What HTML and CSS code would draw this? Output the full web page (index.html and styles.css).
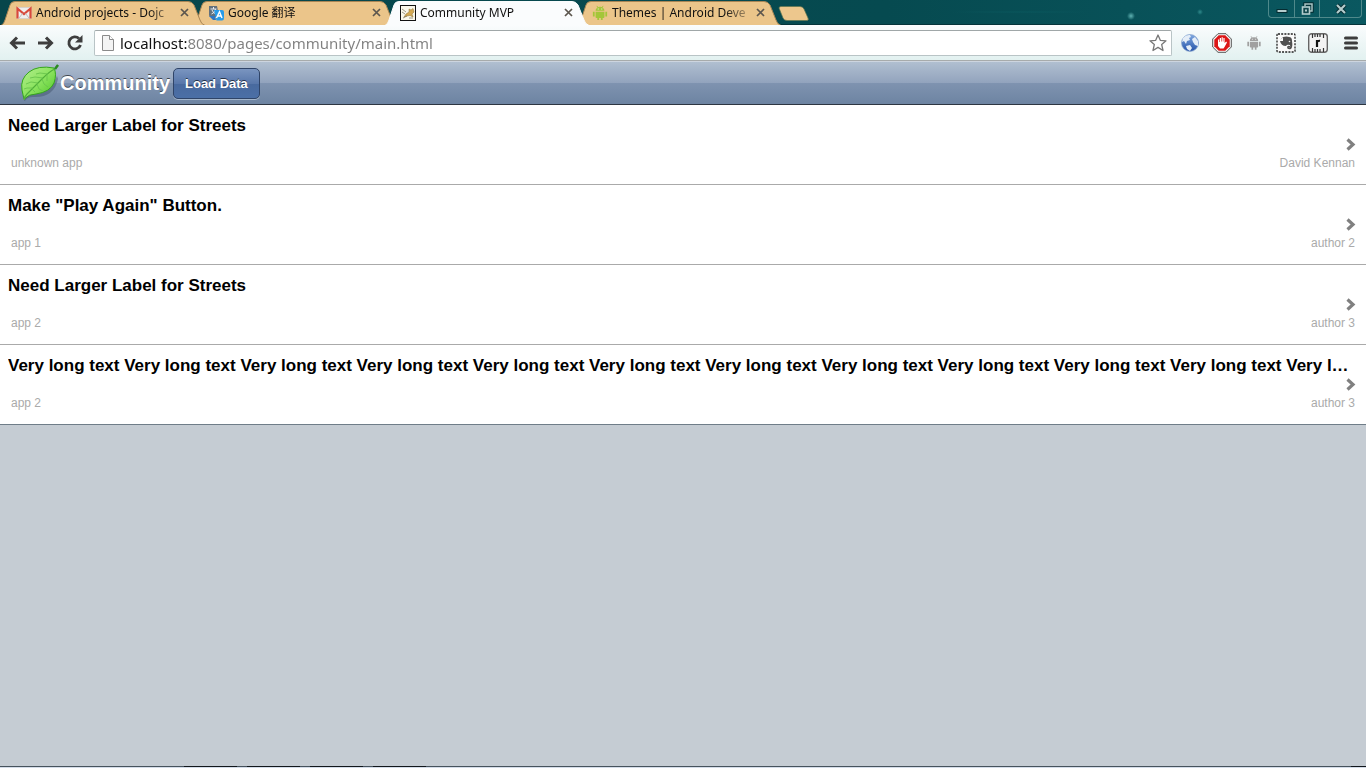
FILE: index.html
```html
<!DOCTYPE html>
<html lang="en">
<head>
<meta charset="utf-8">
<title>Community MVP</title>
<link rel="stylesheet" href="styles.css">
</head>
<body>
<svg width="0" height="0" class="defs" aria-hidden="true">
  <defs>
    <linearGradient id="leafFill" x1="0" y1="0" x2="1" y2="1"><stop offset="0" stop-color="#b5ee8e"/><stop offset=".5" stop-color="#8be35f"/><stop offset="1" stop-color="#4cc424"/></linearGradient>
    <linearGradient id="globeFill" x1="0" y1="0" x2="0" y2="1"><stop offset="0" stop-color="#7fa8e0"/><stop offset="1" stop-color="#2452a8"/></linearGradient>
    <symbol id="tab" viewBox="0 0 206 25"><path d="M1 25.500Q4 24 5 20L10 5Q11 1.500 15 1.500H188Q192 1.500 194 5L200 20Q201 24 205 25.500"/></symbol>
    <symbol id="close" viewBox="0 0 9 9"><path d="M1 1L8 8M8 1L1 8" fill="none" stroke="#5c564e" stroke-width="1.700"/></symbol>
    <symbol id="robot" viewBox="0 0 18 18"><path d="M4 6.500A5 4.500 0 0 1 14 6.500ZM4 7.500H14V13.500Q14 14.500 13 14.500H12V17H10V14.500H8V17H6V14.500H5Q4 14.500 4 13.500ZM1 7.500H3V13H1ZM15 7.500H17V13H15Z"/><path d="M5.500 1L7 3.500M12.500 1L11 3.500" stroke="currentColor"/><path d="M6.500 4.500h1M10.500 4.500h1" stroke="#fff"/></symbol>
    <symbol id="chevron" viewBox="0 0 10 13"><path d="M1.500 1.500L7 6.500L1.500 11.500" fill="none" stroke="#808080" stroke-width="3.200"/></symbol>
  </defs>
</svg>
<header class="browser">
  <div class="strip">
    <nav class="tabs" aria-label="Tabs">
      <div class="tab tab-first">
        <svg class="shape" width="206" height="25"><use href="#tab"/></svg>
        <svg class="fav" viewBox="0 0 16 16"><path d="M1 2.500H15V13.500H1Z" fill="#eee" stroke="#d8cfc8"/><path d="M1.500 13.500V3.500L8 9L14.500 3.500V13.500" fill="none" stroke="#d9483b" stroke-width="2.200"/><path d="M3 13L6.500 8.500M13 13L9.500 8.500" stroke="#bbb" fill="none"/></svg>
        <a class="name" href="#mail">Android projects - Dojc</a>
        <button class="x" aria-label="Close tab"><svg width="9" height="9"><use href="#close"/></svg></button>
      </div>
      <div class="tab">
        <svg class="shape" width="206" height="25"><use href="#tab"/></svg>
        <svg class="fav" viewBox="0 0 16 16"><path d="M1 1H9L11 12H3Q1 12 1 10Z" fill="#62707c"/><path d="M2.500 4H8.500M5.500 2V4M3.500 9Q7 8 7.500 4M4 5Q5 8 8 9" stroke="#e8edf2" fill="none"/><path d="M6 5H14Q16 5 16 7V13Q16 15.500 14 15.500H8.500Z" fill="#279be8"/><path d="M8.500 13L11.500 6.800L14 13M9.500 11H13" stroke="#fff" stroke-width="1.400" fill="none"/><path d="M1 11L5 15H8L7 11Z" fill="#2e75c2"/></svg>
        <a class="name" href="#translate">Google 翻译</a>
        <button class="x" aria-label="Close tab"><svg width="9" height="9"><use href="#close"/></svg></button>
      </div>
      <div class="tab tab-active">
        <svg class="shape" width="206" height="25"><use href="#tab"/></svg>
        <svg class="fav" viewBox="0 0 16 16"><rect x=".5" y=".5" width="15" height="15" fill="#f9f7ea" stroke="#111"/><path d="M4 12L6 9L9 7L9 4L11 5L13 3.500L14 7L12 9L13 12L10 10.500L7 11Z" fill="#d3a954" stroke="#8a7038" stroke-width=".5"/><path d="M2 4L6 7M2 7L5 9M3 13L7 11M9 13H13" stroke="#77705c" stroke-width=".7"/></svg>
        <a class="name" href="#community" aria-current="page">Community MVP</a>
        <button class="x" aria-label="Close tab"><svg width="9" height="9"><use href="#close"/></svg></button>
      </div>
      <div class="tab">
        <svg class="shape" width="206" height="25"><use href="#tab"/></svg>
        <svg class="fav green" viewBox="0 0 18 18"><use href="#robot"/></svg>
        <a class="name" href="#themes">Themes | Android Deve</a>
        <button class="x" aria-label="Close tab"><svg width="9" height="9"><use href="#close"/></svg></button>
      </div>
    </nav>
    <button class="newtab" aria-label="New tab"><svg width="32" height="15" viewBox="0 0 32 15"><path d="M3 .5H22Q25 .5 26 3L30 12Q31 14.500 29 14.500H9Q6 14.500 5 12L1 2Q1 .5 3 .5Z" fill="#edc78d" stroke="#5e744f" stroke-width=".7"/></svg></button>
    <div class="window">
      <button aria-label="Minimize"><svg width="12" height="12"><rect x="1" y="6.500" width="10" height="3" fill="#b4cdcd" stroke="#052c31"/></svg></button>
      <button aria-label="Restore"><svg width="14" height="14" viewBox="0 0 14 14"><path d="M5 4V2H12V9H10" fill="none" stroke="#052c31" stroke-width="3.400"/><path d="M5 4V2H12V9H10" fill="none" stroke="#a7c4c4" stroke-width="1.500"/><rect x="2.500" y="5" width="7" height="7" fill="#12484d" stroke="#b4cdcd" stroke-width="1.600"/><rect x="5" y="7.500" width="2" height="2" fill="#b4cdcd"/></svg></button>
      <button class="wide" aria-label="Close"><svg width="12" height="12" viewBox="0 0 12 12"><path d="M2 2L10 10M10 2L2 10" stroke="#052c31" stroke-width="4"/><path d="M2 2L10 10M10 2L2 10" stroke="#b4cdcd" stroke-width="2.200"/></svg></button>
    </div>
  </div>
  <div class="toolbar">
    <button class="tool" aria-label="Back"><svg viewBox="0 0 18 18"><path d="M17 9H4M9 3.500L3.500 9L9 14.500" fill="none" stroke="#3e3e3e" stroke-width="3"/></svg></button>
    <button class="tool" aria-label="Forward"><svg viewBox="0 0 18 18"><path d="M1 9H14M9 3.500L14.500 9L9 14.500" fill="none" stroke="#3e3e3e" stroke-width="3"/></svg></button>
    <button class="tool" aria-label="Reload"><svg viewBox="0 0 18 18"><path d="M13 4.500A6 6 0 1 0 14.500 11" fill="none" stroke="#3e3e3e" stroke-width="2.900"/><path d="M16.500 1V8.500H9Z" fill="#3e3e3e"/></svg></button>
    <form class="address">
      <svg width="12" height="16" viewBox="0 0 12 16"><path d="M.5 .5H7.500L11.500 4.500V15.500H.5Z" fill="#f4f4f4" stroke="#8a8a8a"/><path d="M7.500 .5V4.500H11.500" fill="#fff" stroke="#8a8a8a"/></svg>
      <input type="text" aria-label="Address" value="localhost:8080/pages/community/main.html">
      <button type="button" aria-label="Bookmark"><svg width="20" height="20" viewBox="0 0 20 20"><path d="M10 2L12.300 7.300L18 7.800L13.700 11.600L15 17.500L10 14.400L5 17.500L6.300 11.600L2 7.800L7.700 7.300Z" fill="#fff" stroke="#777" stroke-width="1.300" stroke-linejoin="round"/></svg></button>
    </form>
    <div class="extensions">
      <button class="ext" aria-label="Globe"><svg viewBox="0 0 20 20"><circle cx="10" cy="10" r="8.500" fill="url(#globeFill)" stroke="#8ba6ce" stroke-width=".7"/><path d="M3 5Q6 1.500 10 2L11 4L9 5L10 7L7 8L6 11L4 8L2 9ZM12 6L15 4L18 8L18 13L15 12L13 9ZM6 13L10 12L12 15L10 18L7 16Z" fill="#e4edf7"/></svg></button>
      <button class="ext" aria-label="Ad blocker"><svg viewBox="0 0 20 20"><path d="M6 .7H14L19.300 6V14L14 19.300H6L.7 14V6Z" fill="#f6f6f6" stroke="#555"/><path d="M6.700 2.300H13.300L17.700 6.700V13.300L13.300 17.700H6.700L2.300 13.300V6.700Z" fill="#dc1616"/><path d="M6 9V6.500H7.200V9H7.800V5H9V8.500H9.600V4.300H10.800V8.500H11.400V5H12.600V10L14.200 8.500L15 9.500L12.500 14L11.500 15.500H8L6 13Z" fill="#fff"/></svg></button>
      <button class="ext grey" aria-label="Android"><svg viewBox="-3 -3 24 24"><use href="#robot" width="18" height="18"/></svg></button>
      <button class="ext" aria-label="Clipper"><svg viewBox="0 0 20 20"><rect x="1" y="1" width="18" height="18" rx="1" fill="#fafafa" stroke="#222" stroke-width="1.300" stroke-dasharray="2 1.200"/><path d="M4 7L7 4Q11 3 13 4Q16 4 16 8Q17 14 15 16Q11 17 11 14Q12 12 14 13V14.500Q12 14 13 15Q15 14 14 12Q11 11 10 13Q5 13 4 8H7V4.500" fill="#505050"/><circle cx="13.500" cy="8.500" r=".8" fill="#eee"/></svg></button>
      <button class="ext" aria-label="Ruler"><svg viewBox="0 0 20 20"><rect x=".7" y=".7" width="18.600" height="18.600" rx="3" fill="#f3f3f3" stroke="#666" stroke-width="1.400"/><path d="M4.500 1V5M7 1V4M9.500 1V4M12 1V4M15.500 1V5M4.500 15V19M7 16V19M9.500 16V19M12 16V19M15.500 15V19" stroke="#333" stroke-width="1.200"/><path d="M9 14V7M9 9Q10 7.500 12 7.800" fill="none" stroke="#111" stroke-width="2.200"/></svg></button>
      <button class="ext" aria-label="Menu"><svg viewBox="0 0 20 20"><path d="M5.500 5H16.500M5.500 10H16.500M5.500 15H16.500" stroke="#3d3d3d" stroke-width="3" stroke-linecap="round"/></svg></button>
    </div>
  </div>
</header>
<main class="app">
  <div class="heading">
    <svg width="40" height="38" viewBox="0 0 40 38"><path d="M4 37Q7 30 12 27Q28 32 37 12L38 15Q34 34 13 33Q7 33 5 37Z" fill="#37485e" opacity=".4"/><path d="M4 35Q3 31 2 26Q0 15 9 8Q18 1 34 4Q37 10 34 19Q30 28 16 30Q9 30 4 35Z" fill="url(#leafFill)" stroke="#35a51d"/><path d="M38 1Q37 2 35 5Q30 7 23 14L7 30Q4 33 4 36" fill="none" stroke="#4fae38" stroke-width="1.100"/><path d="M38 1L35 5" stroke="#2b8a20" stroke-width="2.500"/><path d="M28 10L20 9L16 10M23 14L15 13L10 14M18 19L11 18L6 20M13 24L7 24L4 25M27 11L27 17M22 15L24 20L28 23M17 20L19 25L23 27M12 25L15 28" fill="none" stroke="#69c44d" stroke-width=".9"/></svg>
    <h1>Community</h1>
    <button class="load">Load Data</button>
  </div>
  <ul class="list">
    <li><h2>Need Larger Label for Streets</h2><svg class="arrow" width="10" height="13"><use href="#chevron"/></svg><p><span>unknown app</span><span>David Kennan</span></p></li>
    <li><h2>Make "Play Again" Button.</h2><svg class="arrow" width="10" height="13"><use href="#chevron"/></svg><p><span>app 1</span><span>author 2</span></p></li>
    <li><h2>Need Larger Label for Streets</h2><svg class="arrow" width="10" height="13"><use href="#chevron"/></svg><p><span>app 2</span><span>author 3</span></p></li>
    <li><h2>Very long text Very long text Very long text Very long text Very long text Very long text Very long text Very long text Very long text Very long text Very long text Very long text Very long text</h2><svg class="arrow" width="10" height="13"><use href="#chevron"/></svg><p><span>app 2</span><span>author 3</span></p></li>
  </ul>
</main>
<footer class="edge"><i class="lead"></i><i></i><i></i><i></i><i></i><i class="last"></i></footer>
</body>
</html>
```
FILE: styles.css
```css
* { box-sizing: border-box; }
body {
  margin: 0;
  min-height: 100vh;
  display: flex;
  flex-direction: column;
  background: #c5ccd3;
  font-family: "Liberation Sans", Arial, sans-serif;
}
button { margin: 0; padding: 0; border: 0; background: none; font: inherit; }
svg { display: block; flex: none; }
.defs { position: absolute; }

.browser { font-family: "Noto Sans", "Noto Sans CJK SC", sans-serif; }
.strip {
  display: flex;
  height: 25px;
  background:
    radial-gradient(circle at 1131px 16px, #5fb3b3 0, #5fb3b300 4px),
    radial-gradient(circle at 1200px 12px, #2f8a8c 0, #2f8a8c00 3px),
    radial-gradient(ellipse at 1020px 12px, #0d626780 0, #0d626700 80px),
    linear-gradient(90deg, #07464b, #064a50 65%, #0a5860);
  border-bottom: 1px solid #05343a;
}
.tabs { display: flex; height: 25px; }
.tab {
  position: relative;
  z-index: 1;
  display: flex;
  align-items: center;
  width: 206px;
  height: 25px;
  padding: 0 17px 0 16px;
  gap: 4px;
}
.tab + .tab { margin-left: -14px; }
.tab-first { z-index: 2; }
.tab-active { z-index: 3; }
.shape { position: absolute; left: 0; top: 0; fill: #ebc58a; stroke: #a98655; }
.tab-active .shape { fill: #fafcfd; stroke: #fafcfd; }
.fav { position: relative; width: 16px; height: 16px; }
.green { fill: #a4c639; color: #a4c639; }
.name {
  position: relative;
  flex: 1;
  min-width: 0;
  overflow: hidden;
  white-space: nowrap;
  font-size: 12px;
  line-height: 20px;
  color: #111;
  text-decoration: none;
  -webkit-mask-image: linear-gradient(90deg, #000 112px, #0004 136px);
}
.x { position: relative; }
.newtab { margin: 6px 0 0 -4px; height: 15px; }
.window {
  display: flex;
  height: 18px;
  margin: 0 4px 0 auto;
  border: 1px solid #4f898b;
  border-top: 0;
  border-radius: 0 0 4px 4px;
}
.window button { display: grid; place-items: center; width: 25px; }
.window button + button { border-left: 1px solid #4f898b; }
.window .wide { width: 42px; }

.toolbar {
  display: flex;
  align-items: center;
  height: 36px;
  padding: 0 6px 0 8px;
  background: linear-gradient(#fafcfd, #e2f1f0);
  border-bottom: 1px solid #a7abab;
}
.tool { width: 18px; height: 18px; margin-right: 11px; }
.tool svg { width: 18px; height: 18px; }
.address {
  flex: 1;
  display: flex;
  align-items: center;
  height: 26px;
  margin-left: -1px;
  padding: 0 3px 0 7px;
  background: #fff;
  border: 1px solid #b9c4c6;
  border-top-color: #a0a7a8;
  border-radius: 2px;
}
.address input {
  flex: 1;
  min-width: 0;
  height: 24px;
  margin-left: 6px;
  padding: 0;
  border: 0;
  outline: 0;
  font: 15px/24px "Noto Sans", sans-serif;
  background: linear-gradient(90deg, #111 68px, #808080 68px);
  -webkit-background-clip: text;
  background-clip: text;
  -webkit-text-fill-color: transparent;
}
.extensions { display: flex; gap: 12px; margin-left: 8px; }
.ext, .ext svg { width: 20px; height: 20px; }
.grey { color: #a0a0a0; fill: #a0a0a0; }

.heading {
  display: flex;
  align-items: center;
  height: 44px;
  padding-left: 20px;
  background: linear-gradient(#b0bfd0, #92a3bd 50%, #7f93b0 50%, #6d84a2);
  border-top: 1px solid #cdd5df;
  border-bottom: 1px solid #2d3642;
}
.heading h1 {
  margin: 0;
  font-size: 20px;
  line-height: 24px;
  color: #fff;
  text-shadow: 0 -1px 0 #0009;
}
.load {
  height: 31px;
  margin-left: 3px;
  padding: 0 11px;
  border: 1px solid #2f4468;
  border-radius: 5px;
  background: linear-gradient(#7a95c0, #5877aa 50%, #48699e 50%, #4b6fa6);
  box-shadow: 0 1px 0 #a4b5ca;
  color: #fff;
  font-size: 13px;
  font-weight: bold;
  text-shadow: 0 -1px 0 #0009;
}
.list { margin: 0; padding: 0; list-style: none; }
.list li {
  position: relative;
  height: 80px;
  padding: 10px 11px 0 8px;
  background: #fff;
  border-bottom: 1px solid #aaa;
}
.list li:last-child { border-bottom-color: #6f7d88; }
.list h2 {
  margin: 0;
  overflow: hidden;
  white-space: nowrap;
  text-overflow: ellipsis;
  font-size: 17px;
  line-height: 22px;
  color: #000;
}
.list p {
  display: flex;
  justify-content: space-between;
  margin: 18px 0 0 3px;
  font-size: 12px;
  line-height: 16px;
  color: #aaa;
}
.arrow { position: absolute; right: 10px; top: 33px; }
.edge {
  display: flex;
  gap: 10px;
  height: 2px;
  margin-top: auto;
  background: #d4dce8;
  border-top: 1px solid #46525c;
}
.edge i { width: 53px; margin-top: -1px; border-top: 1px solid #11161b; }
.edge .lead { width: 174px; border: 0; }
.edge .last { width: 15px; margin-left: auto; }
```
